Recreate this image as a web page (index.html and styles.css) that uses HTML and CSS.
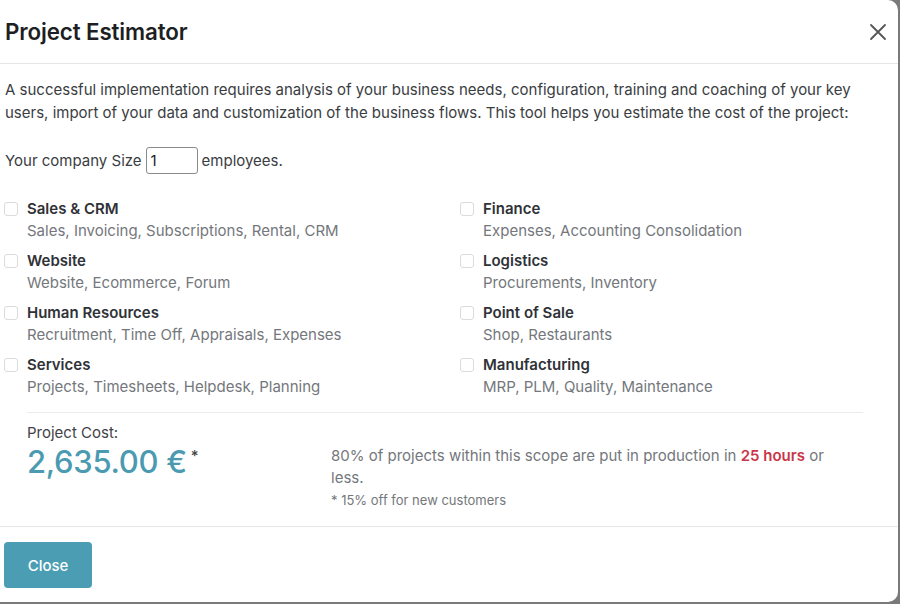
FILE: index.html
```html
<!DOCTYPE html>
<html lang="en">
<head>
<meta charset="utf-8">
<title>Project Estimator</title>
<link rel="stylesheet" href="styles.css">
</head>
<body>
<div class="modal">
  <header class="modal-header">
    <h1 class="modal-title">Project Estimator</h1>
    <button class="modal-close" aria-label="Close">
      <svg width="18" height="18" viewBox="0 0 18 18"><path d="M2 2 L16 16 M16 2 L2 16" stroke="#555" stroke-width="1.8" fill="none" stroke-linecap="round"/></svg>
    </button>
  </header>
  <main class="modal-body">
    <p class="intro">A successful implementation requires analysis of your business needs, configuration, training and coaching of your key users, import of your data and customization of the business flows. This tool helps you estimate the cost of the project:</p>
    <div class="size-row">Your company Size <input class="size-input" type="text" value="1"> employees.</div>
    <div class="apps">
      <div class="app-col">
        <label class="app"><span class="check"></span><span class="app-text"><span class="app-name">Sales &amp; CRM</span><span class="app-sub">Sales, Invoicing, Subscriptions, Rental, CRM</span></span></label>
        <label class="app"><span class="check"></span><span class="app-text"><span class="app-name">Website</span><span class="app-sub">Website, Ecommerce, Forum</span></span></label>
        <label class="app"><span class="check"></span><span class="app-text"><span class="app-name">Human Resources</span><span class="app-sub">Recruitment, Time Off, Appraisals, Expenses</span></span></label>
        <label class="app"><span class="check"></span><span class="app-text"><span class="app-name">Services</span><span class="app-sub">Projects, Timesheets, Helpdesk, Planning</span></span></label>
      </div>
      <div class="app-col">
        <label class="app"><span class="check"></span><span class="app-text"><span class="app-name">Finance</span><span class="app-sub">Expenses, Accounting Consolidation</span></span></label>
        <label class="app"><span class="check"></span><span class="app-text"><span class="app-name">Logistics</span><span class="app-sub">Procurements, Inventory</span></span></label>
        <label class="app"><span class="check"></span><span class="app-text"><span class="app-name">Point of Sale</span><span class="app-sub">Shop, Restaurants</span></span></label>
        <label class="app"><span class="check"></span><span class="app-text"><span class="app-name">Manufacturing</span><span class="app-sub">MRP, PLM, Quality, Maintenance</span></span></label>
      </div>
    </div>
    <section class="cost">
      <div class="cost-left">
        <div class="cost-label">Project Cost:</div>
        <div class="cost-value">2,635.00 €<sup class="star">*</sup></div>
      </div>
      <div class="cost-right">
        <p class="cost-note">80% of projects within this scope are put in production in <strong class="hours">25 hours</strong> or less.</p>
        <p class="cost-foot">* 15% off for new customers</p>
      </div>
    </section>
  </main>
  <footer class="modal-footer">
    <button class="btn-close">Close</button>
  </footer>
</div>
</body>
</html>
```
FILE: styles.css
```css
* { box-sizing: border-box; }

html, body {
  margin: 0;
  height: 100%;
}

body {
  background: #7a7a7a;
  font-family: Inter, "Noto Sans", sans-serif;
  color: #3a3d42;
}

.modal {
  width: 898px;
  height: 602px;
  background: #fff;
  border-radius: 0 10px 10px 0;
  display: flex;
  flex-direction: column;
}

.modal-header {
  height: 64px;
  display: flex;
  align-items: center;
  justify-content: space-between;
  padding: 0 10px 0 5px;
  border-bottom: 1px solid #e6e6e6;
}

.modal-title {
  margin: 0;
  font-size: 22.3px;
  font-weight: 600;
  color: #1d1f23;
  letter-spacing: -0.1px;
}

.modal-close {
  border: 0;
  background: none;
  padding: 0;
  width: 20px;
  height: 20px;
  display: flex;
  align-items: center;
  justify-content: center;
}

.modal-body {
  flex: 1;
  padding: 14px 0 0 5px;
  border-bottom: 1px solid #e6e6e6;
}

.intro {
  margin: 0;
  font-size: 15px;
  line-height: 23px;
  color: #3a3d42;
  padding-right: 20px;
}

.size-row {
  margin-top: 23px;
  display: flex;
  align-items: center;
  font-size: 15px;
  gap: 4px;
}

.size-input {
  width: 52px;
  height: 27px;
  border: 1px solid #8a8a8a;
  border-radius: 3px;
  padding: 0 4px;
  font: inherit;
  color: #222;
}

.apps {
  margin-top: 24px;
  display: grid;
  grid-template-columns: 456px 1fr;
  margin-left: -1px;
}

.app-col {
  display: flex;
  flex-direction: column;
  gap: 8px;
}

.app {
  display: flex;
  align-items: flex-start;
  gap: 9px;
}

.check {
  width: 14px;
  height: 14px;
  margin-top: 4px;
  border: 1px solid #dcdcdc;
  border-radius: 3px;
  flex: none;
}

.app-text {
  display: flex;
  flex-direction: column;
  line-height: 22px;
  font-size: 15px;
}

.app-name {
  font-weight: 600;
  color: #2f3237;
}

.app-sub {
  color: #74777c;
}

.cost {
  margin: 14px 35px 0 22px;
  border-top: 1px solid #ebebeb;
  padding-top: 10px;
  display: flex;
}

.cost-left {
  width: 304px;
}

.cost-label {
  font-size: 15px;
  line-height: 20px;
  color: #3f4247;
}

.cost-value {
  font-size: 31px;
  font-weight: 500;
  color: #4a9bb1;
  line-height: 38px;
  letter-spacing: -0.3px;
}

.star {
  font-size: 15px;
  color: #444;
  vertical-align: top;
  position: relative;
  top: -6px;
  margin-left: 4px;
}

.cost-right {
  width: 500px;
  padding-top: 22px;
}

.cost-note {
  margin: 0;
  font-size: 15px;
  line-height: 22px;
  color: #74777c;
}

.hours {
  color: #c9364a;
  font-weight: 600;
}

.cost-foot {
  margin: 3px 0 0;
  font-size: 13px;
  color: #74777c;
}

.modal-footer {
  height: 75px;
  padding: 15px 0 0 4px;
}

.btn-close {
  width: 88px;
  height: 46px;
  border: 0;
  border-radius: 4px;
  background: #4b9db3;
  color: #fff;
  font-family: inherit;
  font-size: 15px;
  font-weight: 500;
}
```
